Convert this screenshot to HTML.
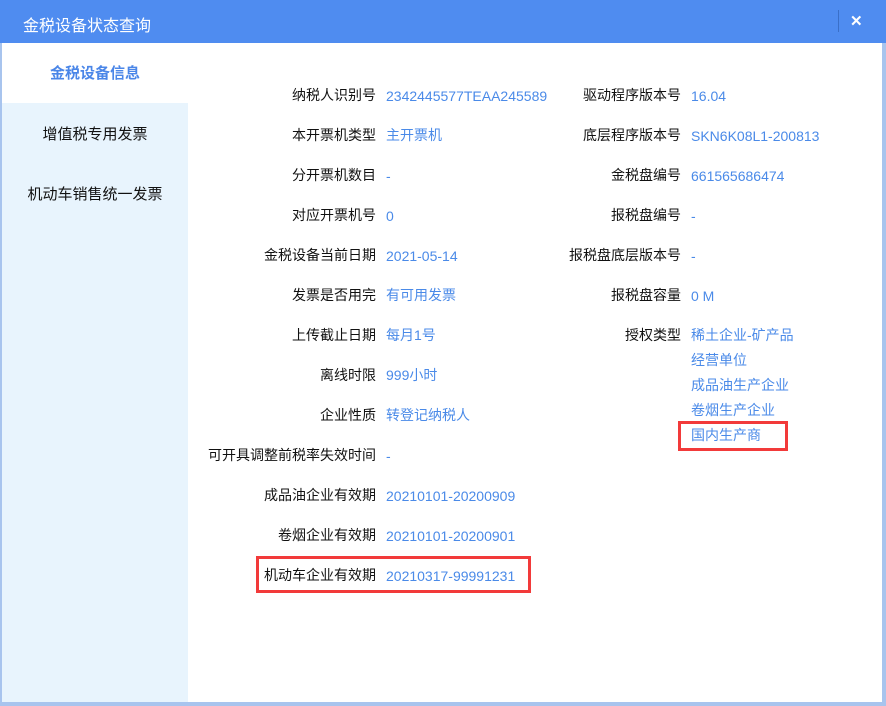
<!DOCTYPE html><html><head><meta charset="utf-8"><style>
body{margin:0;width:886px;height:706px;background:#fff;position:relative;overflow:hidden;font-family:"Liberation Sans","Noto Sans CJK SC",sans-serif;font-size:14px}
.tb{position:absolute;left:0;top:0;width:886px;height:43px;background:#4f8cf0}
.tt{position:absolute;left:23px;top:12px;color:#fff;font-size:16px}
.x{position:absolute;left:850px;top:12px;color:#fff;font-size:15px;font-weight:bold}
.sep{position:absolute;left:838px;top:10px;width:1px;height:22px;background:#3a6fc8}
.frame{position:absolute;left:0;top:43px;width:2px;height:663px;background:#a8c4ee}
.frameR{position:absolute;left:882px;top:43px;width:4px;height:663px;background:#a8c4ee}
.frameB{position:absolute;left:0;top:702px;width:886px;height:4px;background:#a8c4ee}
.side{position:absolute;left:2px;top:103px;width:186px;height:599px;background:#e8f4fd}
.s{position:absolute;width:190px;text-align:center;left:0;font-size:15px}
.l{position:absolute;text-align:right;color:#111;white-space:nowrap}
.v{position:absolute;color:#4a8ae8;white-space:nowrap}
.n{margin-top:3px}
.box{position:absolute;border:3px solid #f23a3a}
</style></head><body>
<div class="tb"></div><div class="tt">金税设备状态查询</div><div class="sep"></div><div class="x">✕</div>
<div class="side"></div>
<div class="frame"></div><div class="frameR"></div><div class="frameB"></div>
<div class="s" style="top:62px;color:#4a86e8;font-weight:bold">金税设备信息</div>
<div class="s" style="top:123px;color:#111">增值税专用发票</div>
<div class="s" style="top:183px;color:#111">机动车销售统一发票</div>
<div class="l" style="right:510px;top:85px">纳税人识别号</div><div class="v n" style="left:386px;top:85px">2342445577TEAA245589</div>
<div class="l" style="right:510px;top:125px">本开票机类型</div><div class="v" style="left:386px;top:125px">主开票机</div>
<div class="l" style="right:510px;top:165px">分开票机数目</div><div class="v n" style="left:386px;top:165px">-</div>
<div class="l" style="right:510px;top:205px">对应开票机号</div><div class="v n" style="left:386px;top:205px">0</div>
<div class="l" style="right:510px;top:245px">金税设备当前日期</div><div class="v n" style="left:386px;top:245px">2021-05-14</div>
<div class="l" style="right:510px;top:285px">发票是否用完</div><div class="v" style="left:386px;top:285px">有可用发票</div>
<div class="l" style="right:510px;top:325px">上传截止日期</div><div class="v" style="left:386px;top:325px">每月1号</div>
<div class="l" style="right:510px;top:365px">离线时限</div><div class="v" style="left:386px;top:365px">999小时</div>
<div class="l" style="right:510px;top:405px">企业性质</div><div class="v" style="left:386px;top:405px">转登记纳税人</div>
<div class="l" style="right:510px;top:445px">可开具调整前税率失效时间</div><div class="v n" style="left:386px;top:445px">-</div>
<div class="l" style="right:510px;top:485px">成品油企业有效期</div><div class="v n" style="left:386px;top:485px">20210101-20200909</div>
<div class="l" style="right:510px;top:525px">卷烟企业有效期</div><div class="v n" style="left:386px;top:525px">20210101-20200901</div>
<div class="l" style="right:510px;top:565px">机动车企业有效期</div><div class="v n" style="left:386px;top:565px">20210317-99991231</div>
<div class="l" style="right:205px;top:85px">驱动程序版本号</div><div class="v n" style="left:691px;top:85px">16.04</div>
<div class="l" style="right:205px;top:125px">底层程序版本号</div><div class="v n" style="left:691px;top:125px">SKN6K08L1-200813</div>
<div class="l" style="right:205px;top:165px">金税盘编号</div><div class="v n" style="left:691px;top:165px">661565686474</div>
<div class="l" style="right:205px;top:205px">报税盘编号</div><div class="v n" style="left:691px;top:205px">-</div>
<div class="l" style="right:205px;top:245px">报税盘底层版本号</div><div class="v n" style="left:691px;top:245px">-</div>
<div class="l" style="right:205px;top:285px">报税盘容量</div><div class="v n" style="left:691px;top:285px">0 M</div>
<div class="l" style="right:205px;top:325px">授权类型</div>
<div class="v" style="left:691px;top:325px">稀土企业-矿产品</div>
<div class="v" style="left:691px;top:350px">经营单位</div>
<div class="v" style="left:691px;top:375px">成品油生产企业</div>
<div class="v" style="left:691px;top:400px">卷烟生产企业</div>
<div class="v" style="left:691px;top:425px">国内生产商</div>
<div class="box" style="left:256px;top:556px;width:269px;height:31px"></div>
<div class="box" style="left:678px;top:421px;width:104px;height:24px"></div>
</body></html>
